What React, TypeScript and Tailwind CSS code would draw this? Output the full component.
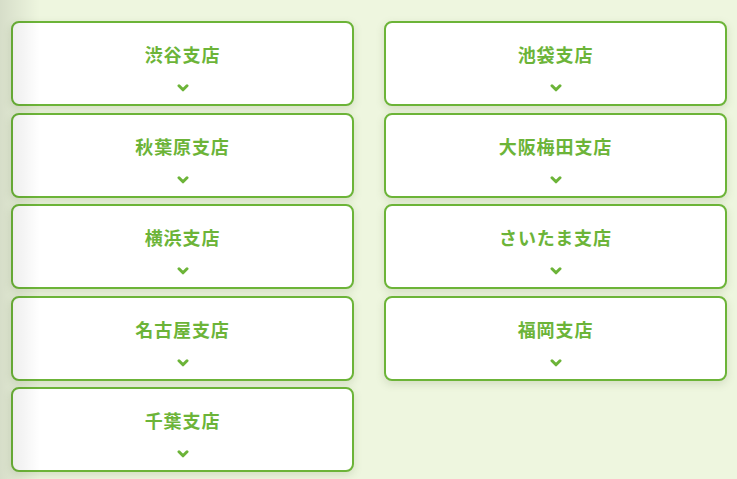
const branches = [
  "渋谷支店",
  "池袋支店",
  "秋葉原支店",
  "大阪梅田支店",
  "横浜支店",
  "さいたま支店",
  "名古屋支店",
  "福岡支店",
  "千葉支店",
];

function Chevron() {
  return (
    <svg
      viewBox="0 0 12 8"
      className="mt-[18px] h-[8px] w-[12px]"
      fill="none"
      stroke="#6cb438"
      strokeWidth={3}
      strokeLinecap="round"
      strokeLinejoin="round"
    >
      <polyline points="2,1.8 6,5.8 10,1.8" />
    </svg>
  );
}

function BranchCard({ name }: { name: string }) {
  return (
    <div className="flex h-[85px] w-full cursor-pointer flex-col items-center rounded-[8px] border-[2.5px] border-[#6cb438] bg-white pt-[19px] shadow-[0_3px_8px_rgba(90,110,60,0.18)]">
      <span className="text-[18px] font-bold leading-[24px] tracking-[0.05em] text-[#6cb438]">
        {name}
      </span>
      <Chevron />
    </div>
  );
}

export default function App() {
  return (
    <div
      className="relative min-h-screen bg-[#eef6df]"
      style={{ fontFamily: '"Noto Sans CJK JP", "Noto Sans", sans-serif' }}
    >
      <div className="grid grid-cols-2 gap-x-[30px] gap-y-[6.5px] pl-[11px] pr-[10px] pt-[21px]">
        {branches.map((b) => (
          <BranchCard key={b} name={b} />
        ))}
      </div>
      <div className="pointer-events-none absolute inset-y-0 left-0 w-[40px] bg-linear-to-r from-black/10 to-transparent" />
    </div>
  );
}
